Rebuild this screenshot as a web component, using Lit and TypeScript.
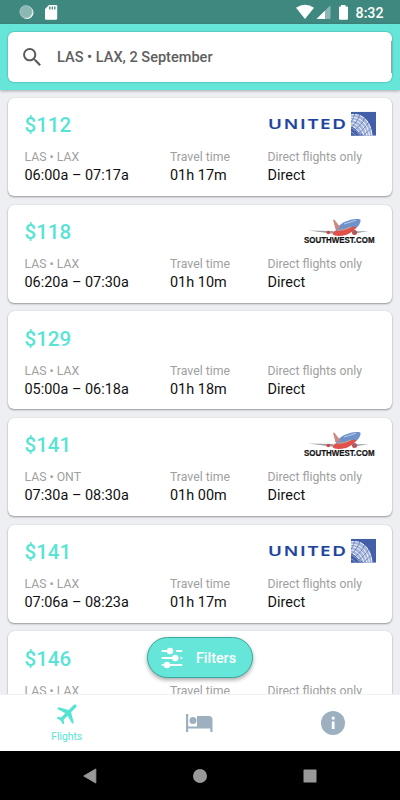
import { LitElement, html, css, nothing } from "lit";
import { customElement, property } from "lit/decorators.js";

interface Flight {
  price: string;
  route: string;
  hours: string;
  duration: string;
  carrier: "united" | "southwest" | "none";
}

const flights: Flight[] = [
  { price: "$112", route: "LAS • LAX", hours: "06:00a – 07:17a", duration: "01h 17m", carrier: "united" },
  { price: "$118", route: "LAS • LAX", hours: "06:20a – 07:30a", duration: "01h 10m", carrier: "southwest" },
  { price: "$129", route: "LAS • LAX", hours: "05:00a – 06:18a", duration: "01h 18m", carrier: "none" },
  { price: "$141", route: "LAS • ONT", hours: "07:30a – 08:30a", duration: "01h 00m", carrier: "southwest" },
  { price: "$141", route: "LAS • LAX", hours: "07:06a – 08:23a", duration: "01h 17m", carrier: "united" },
  { price: "$146", route: "LAS • LAX", hours: "08:00a – 09:15a", duration: "01h 15m", carrier: "none" },
];

@customElement("carrier-logo")
export class CarrierLogo extends LitElement {
  @property() carrier = "none";

  static styles = css`
    :host { display: block; height: 26px; }
    svg { display: block; }
    .united-name { font: 600 13.5px "Open Sans", "Liberation Sans", sans-serif; fill: #1b43a0; stroke: #1b43a0; stroke-width: 0.2; }
    .sw-name { font: 700 8.600px "Liberation Sans", sans-serif; fill: #111; stroke: #111; stroke-width: 0.2; }
  `;

  private united() {
    return html`<svg width="108" height="26" viewBox="0 0 108 26">
      <g transform="translate(0 18.200) scale(1.380 1)">
        <text class="united-name" x="0" y="0" textLength="56.500" lengthAdjust="spacing">UNITED</text>
      </g>
      <svg x="83" y="0.800" width="25" height="24" viewBox="0 0 25 24">
        <rect width="25" height="24" fill="#435fa8" />
        <path d="M0 3C12 1 20 10 21 24H13L0 14Z" fill="#a5b4da" />
        <g fill="none" stroke="#f4f7ff" stroke-width="1">
          <path d="M0 3C12 1 20 10 21 24M0 5.500C9 5 17 12 18.500 24M0 8C7 8 14 14 16 24M0 11C6 12 11 17 13 24M0 14C4 15 8 19 10 24" />
        </g>
        <g fill="none" stroke="#435fa8" stroke-width=".6">
          <path d="M4 1C3 5 1 9 0 11M9 2C8 7 4 12 1 15M14 5C12 11 8 15 4 18M18 10C15 15 12 18 8 21M21 16C18 19 15 21 12 24" />
        </g>
        <path d="M0 15L11 24H0Z" fill="#435fa8" />
        <path d="M0 16Q6 18 9 24M0 20Q3 21 5 24" fill="none" stroke="#aab8dc" stroke-width=".7" />
      </svg>
    </svg>`;
  }

  private southwest() {
    return html`<svg width="72" height="26" viewBox="0 0 72 26">
      <g transform="translate(0 .5)">
        <path d="M4.500 12L29 12.600L33 15L27 15Z" fill="#9a9fa5" />
        <path d="M47 13L64.500 12.600L51 15Z" fill="#9a9fa5" />
        <path d="M32 11C35 6 40 3 46 1.500C51 .2 56.500 0 56.500 1.500C57 5 53 10 47 13Q38 17 32 15Z" fill="#6f92cb" />
        <path d="M31 12Q39 13 46 9.500Q49 7.500 52.500 8.500C49 13 45 16.500 38 17.300Q30 18 28.500 15.500Z" fill="#e2504a" />
        <path d="M33 11.800Q41 12 47 8.500" stroke="#f0a868" stroke-width=".8" fill="none" />
        <path d="M31.500 11L29 1.200H30.500L36.500 9Z" fill="#cd8a80" />
        <path d="M40 5.500L52 1.800" stroke="#b9cdec" stroke-width="1" />
        <circle cx="24.300" cy="14" r="1.800" fill="#d34444" />
        <circle cx="50.500" cy="14" r="2.500" fill="#d34444" />
        <circle cx="50.500" cy="13.700" r="1.400" fill="#6d7789" />
      </g>
      <text class="sw-name" x="0" y="24.800" textLength="70.500" lengthAdjust="spacingAndGlyphs">SOUTHWEST.COM</text>
    </svg>`;
  }

  render() {
    if (this.carrier === "united") return this.united();
    if (this.carrier === "southwest") return this.southwest();
    return nothing;
  }
}

@customElement("flight-card")
export class FlightCard extends LitElement {
  @property({ attribute: false }) flight!: Flight;

  static styles = css`
    :host {
      display: block; box-sizing: border-box; height: 98px; padding: 13.200px 16px 0 16.500px;
      background: #fff; border-radius: 6px;
      box-shadow: 0 1px 2px rgba(0, 0, 0, 0.36), 0 0 1px rgba(0, 0, 0, 0.18);
    }
    .top { display: flex; justify-content: space-between; height: 37px; }
    .price { font-size: 20.500px; line-height: 28px; font-weight: 500; color: #59e3d5; }
    .details { display: grid; grid-template-columns: 145.500px 97.500px 1fr; }
    .label { font-size: 12.250px; line-height: 18px; color: #a0a0a0; white-space: nowrap; }
    .value { font-size: 14.450px; line-height: 19px; color: #111; white-space: nowrap; }
  `;

  render() {
    const f = this.flight;
    const cells = [[f.route, f.hours], ["Travel time", f.duration], ["Direct flights only", "Direct"]];
    return html`
      <div class="top">
        <span class="price">${f.price}</span>
        <carrier-logo .carrier=${f.carrier}></carrier-logo>
      </div>
      <div class="details">
        ${cells.map(([label, value]) => html`<div>
          <div class="label">${label}</div>
          <div class="value">${value}</div>
        </div>`)}
      </div>`;
  }
}

@customElement("app-root")
export class AppRoot extends LitElement {
  static styles = css`
    :host {
      display: flex; flex-direction: column; position: relative; width: 400px; height: 800px;
      overflow: hidden; background: #eeeff3; font-family: Roboto, sans-serif;
    }
    svg { display: block; }
    .status {
      flex: none; height: 24px; box-sizing: border-box; padding: 0 16.500px 0 19px; background: #3f8880;
      display: flex; align-items: center; justify-content: space-between; color: #fff;
    }
    .group { display: flex; align-items: center; }
    .clock { font-size: 14.200px; font-weight: 500; line-height: 24px; padding-top: 1px; }
    .header {
      flex: none; height: 66px; box-sizing: border-box; padding: 8px; background: #65e6d9;
      box-shadow: 0 1px 3px rgba(0, 0, 0, 0.3); z-index: 1;
    }
    .search {
      position: relative; height: 50px; box-sizing: border-box; display: flex; align-items: center;
      gap: 12.500px; padding-left: 12px;
      background: #fff; border-radius: 6px; color: #5e5e5e; font-size: 14.550px; font-weight: 500;
      box-shadow: 0 0 2px rgba(0, 0, 0, 0.4);
    }
    .search::after {
      content: ""; position: absolute; right: 0; top: 9px; width: 1px; height: 32px; background: #8ba9b0;
    }
    .list {
      flex: 1; min-height: 0; overflow: hidden; display: flex; flex-direction: column; gap: 8.700px; padding: 8px 8px 0;
    }
    flight-card { flex: none; }
    .filters {
      position: absolute; left: 147px; top: 637px; width: 106px; height: 41px; box-sizing: border-box;
      display: flex; align-items: center; gap: 13.500px; padding-left: 12.500px; border-radius: 21px;
      border: 1px solid #36aaa0; background: #65e6d9; color: #fff; font-size: 14.300px; font-weight: 500;
      box-shadow: 0 2px 4px rgba(0, 0, 0, 0.35);
    }
    .tabs {
      flex: none; height: 57px; box-sizing: border-box; border-top: 1px solid #f1f1f2; background: #fff;
      padding-bottom: 1px;
      display: grid; grid-template-columns: repeat(3, 1fr); justify-items: center; align-items: center; color: #9db0c0;
    }
    .tab.active { display: flex; flex-direction: column; align-items: center; color: #55e3d4; padding-bottom: 2px; }
    .tab.active svg { margin-left: 1px; }
    .caption { font-size: 10.300px; line-height: 12px; margin-top: 4px; }
    .nav {
      flex: none; height: 49px; background: #000; display: flex; justify-content: center; align-items: center; gap: 96px;
    }
  `;

  render() {
    return html`
      <div class="status">
        <div class="group">
          <svg width="40" height="24" viewBox="0 0 40 24">
            <circle cx="8" cy="12.500" r="6.500" fill="#fff" />
            <circle cx="7" cy="11.700" r="6.500" fill="#8cb8b3" />
            <circle cx="7" cy="11.700" r="6" fill="none" stroke="#b9d4d1" stroke-dasharray="1 1" />
            <path d="M30 5H37Q38.200 5 38.200 6.200V18.500Q38.200 19.700 37 19.700H27.200Q26 19.700 26 18.500V9Z" fill="#fff" />
            <path d="M30.800 6.500V9.500M33.300 6.500V9.500M35.800 6.500V9.500" stroke="#3f8880" stroke-width="1.300" />
          </svg>
        </div>
        <div class="group">
          <svg width="60" height="24" viewBox="0 0 60 24">
            <path d="M0 7.800Q9 1.500 18 7.800L9 19Z" fill="#fff" />
            <path d="M34.500 5.200V19H20.500Z" fill="#8ab7b2" />
            <path d="M29 10.700V19H20.500Z" fill="#fff" />
            <path d="M43 6.500H45V5H49.500V6.500H51Q52 6.500 52 7.500V18.800Q52 19.800 51 19.800H44Q43 19.800 43 18.800V7.500Q43 6.500 44 6.500Z" fill="#fff" />
          </svg>
          <span class="clock">8:32</span>
        </div>
      </div>
      <div class="header">
        <div class="search">
          <svg width="24.500" height="24.500" viewBox="0 0 24 24" fill="#5a5a5a">
            <path d="M15.500 14h-.79l-.28-.27A6.471 6.471 0 0 0 16 9.500 6.500 6.500 0 1 0 9.500 16c1.610 0 3.090-.59 4.230-1.570l.27.28v.79l5 4.990L20.490 19l-4.990-5zm-6 0C7.010 14 5 11.990 5 9.500S7.010 5 9.500 5 14 7.010 14 9.500 11.990 14 9.500 14z" />
          </svg>
          <span>LAS • LAX, 2 September</span>
        </div>
      </div>
      <div class="list">${flights.map((f) => html`<flight-card .flight=${f}></flight-card>`)}</div>
      <div class="filters">
        <svg width="22" height="22" viewBox="0 0 22 22" stroke="#fff" stroke-width="2" stroke-linecap="round" fill="#fff">
          <path d="M1.500 4H11M16 4H20.500M1.500 11H12M20.300 11H20.500M1.500 18H2M8 18H20.500" fill="none" />
          <circle cx="9" cy="4" r="2.200" /><circle cx="14.300" cy="11" r="2.200" /><circle cx="6" cy="18" r="2.200" />
        </svg>
        <span>Filters</span>
      </div>
      <div class="tabs">
        <div class="tab active">
          <svg width="27" height="27" viewBox="0 0 24 24" fill="currentColor">
            <path transform="rotate(45 12 12)" d="M21.500 15.500v-1.800L13.500 9V3c0-1-.6-1.800-1.500-1.800S10.500 2 10.500 3v6l-8 4.700v1.800l8-2.200v5.200L8 20.200v1.500l4-1 4 1v-1.500l-2.500-1.700v-5.200z" />
          </svg>
          <span class="caption">Flights</span>
        </div>
        <div class="tab">
          <svg width="27" height="20" viewBox="0 0 27 20" fill="currentColor">
            <path d="M0 1H2.200V13.500H11V3H23Q26.500 3 26.500 6.500V19H24.300V15.500H2.200V19H0Z" />
            <circle cx="7" cy="7.500" r="3.500" />
          </svg>
        </div>
        <div class="tab">
          <svg width="24" height="24" viewBox="0 0 24 24" fill="currentColor">
            <circle cx="12" cy="12" r="12" />
            <path d="M10.800 5.800H13.500V8.500H10.800ZM10.800 10.500H13.500V18H10.800Z" fill="#fff" />
          </svg>
        </div>
      </div>
      <div class="nav">
        <svg width="14" height="16" viewBox="0 0 14 16" fill="#999"><path d="M12.800 1V15L.8 8Z" stroke="#999" stroke-linejoin="round" /></svg>
        <svg width="14" height="14" viewBox="0 0 14 14" fill="#999"><circle cx="7" cy="7" r="7" /></svg>
        <svg width="14" height="14" viewBox="0 0 14 14" fill="#999"><rect x=".5" y=".5" width="13" height="13" rx=".5" /></svg>
      </div>`;
  }
}
